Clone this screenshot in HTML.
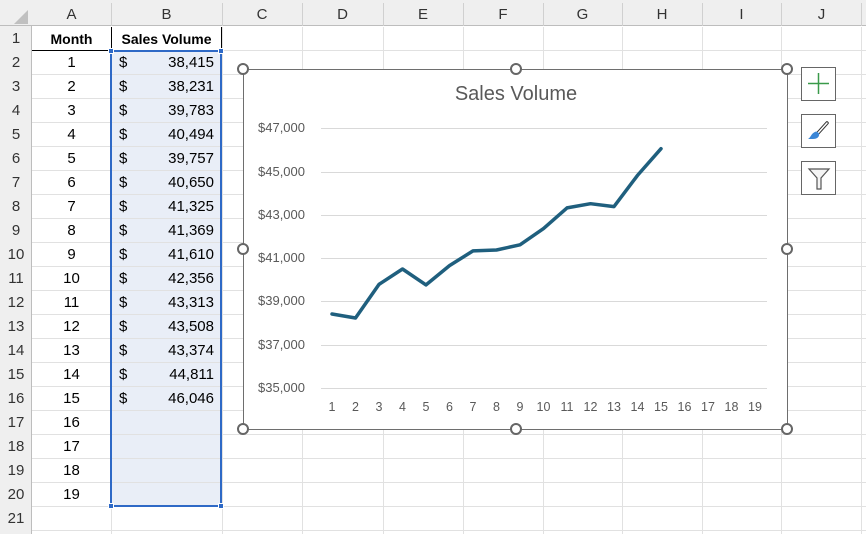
<!DOCTYPE html>
<html><head><meta charset="utf-8"><style>
*{margin:0;padding:0;box-sizing:border-box}
body{width:866px;height:534px;overflow:hidden;background:#fff;font-family:"Liberation Sans",Arial,sans-serif;position:relative}
.a{position:absolute}
.hl{position:absolute;left:32px;width:834px;height:1px;background:#e1e1e1}
.vl{position:absolute;top:27px;width:1px;height:507px;background:#e1e1e1}
.ch{position:absolute;top:0;height:26px;line-height:30px;text-align:center;font-size:15px;color:#333}
.rh{position:absolute;left:0;width:32px;height:24px;line-height:24px;text-align:center;font-size:15px;color:#333}
.m{position:absolute;left:32px;width:79px;height:24px;line-height:24px;text-align:center;font-size:15px;color:#000}
.d{position:absolute;left:119px;font-size:15px;color:#000;height:24px;line-height:24px}
.v{position:absolute;left:120px;width:94px;text-align:right;font-size:15px;height:24px;line-height:24px}
.yl{position:absolute;left:244px;width:61px;text-align:right;font-size:13px;color:#595959}
.xl{position:absolute;top:400px;width:20px;text-align:center;font-size:12.5px;color:#595959}
.h{position:absolute;width:12px;height:12px;border:2px solid #666;border-radius:50%;background:#fff}
.btn{position:absolute;left:801px;width:35px;height:34px;border:1px solid #666;background:#fff}
</style></head><body>
<div class="a" style="left:0;top:0;width:866px;height:26px;background:#efefef;border-bottom:1px solid #bdbdbd"></div>
<div class="a" style="left:0;top:26px;width:32px;height:508px;background:#efefef;border-right:1px solid #bdbdbd"></div>
<svg class="a" style="left:14px;top:10px" width="14" height="14"><polygon points="14,0 14,14 0,14" fill="#c0c0c0"/></svg>
<div class="ch" style="left:32px;width:79px">A</div>
<div class="ch" style="left:111px;width:111px">B</div>
<div class="ch" style="left:222px;width:80px">C</div>
<div class="ch" style="left:302px;width:81px">D</div>
<div class="ch" style="left:383px;width:80px">E</div>
<div class="ch" style="left:463px;width:80px">F</div>
<div class="ch" style="left:543px;width:79px">G</div>
<div class="ch" style="left:622px;width:80px">H</div>
<div class="ch" style="left:702px;width:79px">I</div>
<div class="ch" style="left:781px;width:81px">J</div>
<div class="a" style="left:111px;top:3px;width:1px;height:23px;background:#d0d0d0"></div>
<div class="a" style="left:222px;top:3px;width:1px;height:23px;background:#d0d0d0"></div>
<div class="a" style="left:302px;top:3px;width:1px;height:23px;background:#d0d0d0"></div>
<div class="a" style="left:383px;top:3px;width:1px;height:23px;background:#d0d0d0"></div>
<div class="a" style="left:463px;top:3px;width:1px;height:23px;background:#d0d0d0"></div>
<div class="a" style="left:543px;top:3px;width:1px;height:23px;background:#d0d0d0"></div>
<div class="a" style="left:622px;top:3px;width:1px;height:23px;background:#d0d0d0"></div>
<div class="a" style="left:702px;top:3px;width:1px;height:23px;background:#d0d0d0"></div>
<div class="a" style="left:781px;top:3px;width:1px;height:23px;background:#d0d0d0"></div>
<div class="a" style="left:861px;top:3px;width:1px;height:23px;background:#d0d0d0"></div>
<div class="a" style="left:111px;top:51px;width:111px;height:456px;background:#e9eef7"></div>
<div class="hl" style="top:50px;background:#000;left:32px;width:190px"></div>
<div class="hl" style="top:50px;left:222px;width:644px"></div>
<div class="hl" style="top:74px"></div><div class="hl" style="top:98px"></div><div class="hl" style="top:122px"></div><div class="hl" style="top:146px"></div><div class="hl" style="top:170px"></div><div class="hl" style="top:194px"></div><div class="hl" style="top:218px"></div><div class="hl" style="top:242px"></div><div class="hl" style="top:266px"></div><div class="hl" style="top:290px"></div><div class="hl" style="top:314px"></div><div class="hl" style="top:338px"></div><div class="hl" style="top:362px"></div><div class="hl" style="top:386px"></div><div class="hl" style="top:410px"></div><div class="hl" style="top:434px"></div><div class="hl" style="top:458px"></div><div class="hl" style="top:482px"></div><div class="hl" style="top:506px"></div><div class="hl" style="top:530px"></div>
<div class="vl" style="left:111px"></div><div class="vl" style="left:222px"></div><div class="vl" style="left:302px"></div><div class="vl" style="left:383px"></div><div class="vl" style="left:463px"></div><div class="vl" style="left:543px"></div><div class="vl" style="left:622px"></div><div class="vl" style="left:702px"></div><div class="vl" style="left:781px"></div><div class="vl" style="left:861px"></div>
<div class="a" style="left:111px;top:27px;width:1px;height:24px;background:#000"></div>
<div class="a" style="left:221px;top:27px;width:1px;height:24px;background:#000"></div>
<div class="rh" style="top:27px">1</div><div class="rh" style="top:51px">2</div><div class="rh" style="top:75px">3</div><div class="rh" style="top:99px">4</div><div class="rh" style="top:123px">5</div><div class="rh" style="top:147px">6</div><div class="rh" style="top:171px">7</div><div class="rh" style="top:195px">8</div><div class="rh" style="top:219px">9</div><div class="rh" style="top:243px">10</div><div class="rh" style="top:267px">11</div><div class="rh" style="top:291px">12</div><div class="rh" style="top:315px">13</div><div class="rh" style="top:339px">14</div><div class="rh" style="top:363px">15</div><div class="rh" style="top:387px">16</div><div class="rh" style="top:411px">17</div><div class="rh" style="top:435px">18</div><div class="rh" style="top:459px">19</div><div class="rh" style="top:483px">20</div><div class="rh" style="top:507px">21</div>
<div class="m" style="top:27px;font-weight:bold;font-size:14px">Month</div>
<div class="m" style="top:51px">1</div><div class="m" style="top:75px">2</div><div class="m" style="top:99px">3</div><div class="m" style="top:123px">4</div><div class="m" style="top:147px">5</div><div class="m" style="top:171px">6</div><div class="m" style="top:195px">7</div><div class="m" style="top:219px">8</div><div class="m" style="top:243px">9</div><div class="m" style="top:267px">10</div><div class="m" style="top:291px">11</div><div class="m" style="top:315px">12</div><div class="m" style="top:339px">13</div><div class="m" style="top:363px">14</div><div class="m" style="top:387px">15</div><div class="m" style="top:411px">16</div><div class="m" style="top:435px">17</div><div class="m" style="top:459px">18</div><div class="m" style="top:483px">19</div>
<div class="a" style="left:112px;top:27px;width:109px;height:24px;line-height:24px;text-align:center;font-weight:bold;font-size:14px">Sales Volume</div>
<div class="d" style="top:51px">$</div><div class="v" style="top:51px">38,415</div>
<div class="d" style="top:75px">$</div><div class="v" style="top:75px">38,231</div>
<div class="d" style="top:99px">$</div><div class="v" style="top:99px">39,783</div>
<div class="d" style="top:123px">$</div><div class="v" style="top:123px">40,494</div>
<div class="d" style="top:147px">$</div><div class="v" style="top:147px">39,757</div>
<div class="d" style="top:171px">$</div><div class="v" style="top:171px">40,650</div>
<div class="d" style="top:195px">$</div><div class="v" style="top:195px">41,325</div>
<div class="d" style="top:219px">$</div><div class="v" style="top:219px">41,369</div>
<div class="d" style="top:243px">$</div><div class="v" style="top:243px">41,610</div>
<div class="d" style="top:267px">$</div><div class="v" style="top:267px">42,356</div>
<div class="d" style="top:291px">$</div><div class="v" style="top:291px">43,313</div>
<div class="d" style="top:315px">$</div><div class="v" style="top:315px">43,508</div>
<div class="d" style="top:339px">$</div><div class="v" style="top:339px">43,374</div>
<div class="d" style="top:363px">$</div><div class="v" style="top:363px">44,811</div>
<div class="d" style="top:387px">$</div><div class="v" style="top:387px">46,046</div>
<div class="a" style="left:110px;top:50px;width:112px;height:457px;border:2px solid #2e69c6"></div>
<div class="a" style="left:108px;top:48px;width:6px;height:6px;background:#2e69c6;border:1px solid #fff"></div>
<div class="a" style="left:218px;top:48px;width:6px;height:6px;background:#2e69c6;border:1px solid #fff"></div>
<div class="a" style="left:108px;top:503px;width:6px;height:6px;background:#2e69c6;border:1px solid #fff"></div>
<div class="a" style="left:218px;top:503px;width:6px;height:6px;background:#2e69c6;border:1px solid #fff"></div>
<div class="a" style="left:243px;top:69px;width:545px;height:361px;background:#fff;border:1px solid #6e6e6e"></div>
<div class="a" style="left:243px;top:83px;width:545px;text-align:center;font-size:20px;color:#595959;padding-left:1px">Sales Volume</div>
<svg class="a" style="left:0;top:0" width="866" height="534">
<g stroke="#d9d9d9" stroke-width="1">
<line x1="321" x2="767" y1="128.5" y2="128.5"/><line x1="321" x2="767" y1="172.5" y2="172.5"/><line x1="321" x2="767" y1="215.5" y2="215.5"/><line x1="321" x2="767" y1="258.5" y2="258.5"/><line x1="321" x2="767" y1="301.5" y2="301.5"/><line x1="321" x2="767" y1="345.5" y2="345.5"/><line x1="321" x2="767" y1="388.5" y2="388.5"/>
</g>
<polyline fill="none" stroke="#1f5f7e" stroke-width="3.5" stroke-linejoin="round" stroke-linecap="round" points="332,314 355.5,318 379,284.4 402.5,269 426,284.9 449.5,265.6 473,250.9 496.5,250 520,244.8 543.5,228.6 567,207.9 590.5,203.7 614,206.6 637.5,175.4 661,148.7"/>
</svg>
<div class="yl" style="top:120px">$47,000</div><div class="yl" style="top:164px">$45,000</div><div class="yl" style="top:207px">$43,000</div><div class="yl" style="top:250px">$41,000</div><div class="yl" style="top:293px">$39,000</div><div class="yl" style="top:337px">$37,000</div><div class="yl" style="top:380px">$35,000</div>
<div class="xl" style="left:322px">1</div><div class="xl" style="left:345.5px">2</div><div class="xl" style="left:369px">3</div><div class="xl" style="left:392.5px">4</div><div class="xl" style="left:416px">5</div><div class="xl" style="left:439.5px">6</div><div class="xl" style="left:463px">7</div><div class="xl" style="left:486.5px">8</div><div class="xl" style="left:510px">9</div><div class="xl" style="left:533.5px">10</div><div class="xl" style="left:557px">11</div><div class="xl" style="left:580.5px">12</div><div class="xl" style="left:604px">13</div><div class="xl" style="left:627.5px">14</div><div class="xl" style="left:651px">15</div><div class="xl" style="left:674.5px">16</div><div class="xl" style="left:698px">17</div><div class="xl" style="left:721.5px">18</div><div class="xl" style="left:745px">19</div>
<div class="h" style="left:237px;top:63px"></div><div class="h" style="left:510px;top:63px"></div><div class="h" style="left:781px;top:63px"></div>
<div class="h" style="left:237px;top:243px"></div><div class="h" style="left:781px;top:243px"></div>
<div class="h" style="left:237px;top:423px"></div><div class="h" style="left:510px;top:423px"></div><div class="h" style="left:781px;top:423px"></div>
<div class="btn" style="top:67px"><svg width="33" height="32"><path d="M16.5 5V26M6 15.5H27" stroke="#3a9a4a" stroke-width="1.5"/></svg></div>
<div class="btn" style="top:114px"><svg width="33" height="32"><path d="M25 8L16 18" stroke="#333" stroke-width="3.5" stroke-linecap="round"/><path d="M25 8L16 18" stroke="#fff" stroke-width="1.5" stroke-linecap="round"/><path d="M14 16.5C19 17.5 18 24 11 24L6 24C9 22.5 9 18 14 16.5Z" fill="#3b86d6"/></svg></div>
<div class="btn" style="top:161px"><svg width="33" height="32"><path d="M7 7H27L19 16V27H15V16Z" fill="#f4f4f4" stroke="#555" stroke-width="1.2"/></svg></div>
</body></html>
